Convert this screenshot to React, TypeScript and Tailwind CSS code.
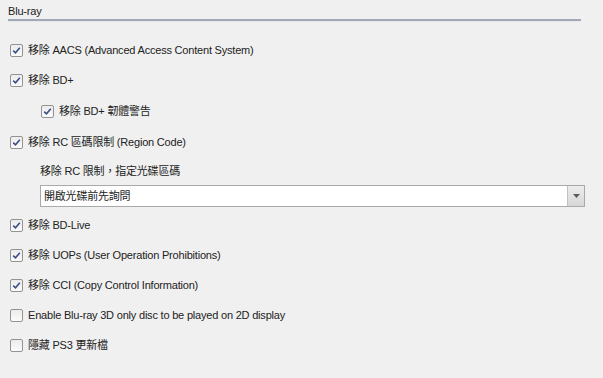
const font = { fontFamily: '"Liberation Sans", "Noto Sans CJK TC", sans-serif' }

const CheckBox = ({ checked }: { checked: boolean }) => (
  <span className="flex h-[13px] w-[13px] shrink-0 items-center justify-center rounded-[2px] border border-[#939393] bg-gradient-to-b from-[#ececec] to-[#fbfbfb]">
    {checked && (
      <svg width="9" height="9" viewBox="0 0 9 9">
        <path d="M1.2 4.6 L3.5 6.8 L7.8 1.8" fill="none" stroke="#3d4d85" strokeWidth="1.6" />
      </svg>
    )}
  </span>
)

const Row = ({
  label,
  checked = true,
  indent = false,
  tall = false,
}: {
  label: string
  checked?: boolean
  indent?: boolean
  tall?: boolean
}) => (
  <div className={`flex items-center gap-[5px] ${tall ? "h-[31px]" : "h-[30px]"} ${indent ? "pl-[41px]" : "pl-[10px]"}`}>
    <CheckBox checked={checked} />
    <span>{label}</span>
  </div>
)

export default function App() {
  return (
    <div className="h-[378px] w-[603px] overflow-hidden bg-[#f0f0f0] text-[11px] tracking-[-0.2px] text-[#222]" style={font}>
      <div className="px-[8px] pt-[4px] pr-[22px]">
        <div className="text-[11px] leading-[14px] text-[#222]">Blu-ray</div>
        <div className="mt-[1px] h-[2px] bg-[#a3a9b3]" />
        <div className="h-[1px] bg-[#e6e9ee]" />
      </div>

      <div className="mt-[13px]">
        <Row label="移除 AACS (Advanced Access Content System)" />
        <Row label="移除 BD+" tall />
        <Row label="移除 BD+ 韌體警告" indent tall />
        <Row label="移除 RC 區碼限制 (Region Code)" />
        <div className="flex h-[28px] items-center pl-[40px]">移除 RC 限制，指定光碟區碼</div>
        <div className="ml-[40px] flex h-[22px] w-[545px] border border-[#a9a9a9] bg-white">
          <div className="flex flex-1 items-center pl-[3px]">開啟光碟前先詢問</div>
          <div className="flex w-[17px] items-center justify-center border-l border-[#c2c2c2] bg-gradient-to-b from-[#ededed] to-[#d6d6d6]">
            <svg width="7" height="4" viewBox="0 0 7 4">
              <path d="M0 0 L7 0 L3.5 4 Z" fill="#5a5a5a" />
            </svg>
          </div>
        </div>
        <div className="h-[3px]" />
        <Row label="移除 BD-Live" />
        <Row label="移除 UOPs (User Operation Prohibitions)" />
        <Row label="移除 CCI (Copy Control Information)" />
        <Row label="Enable Blu-ray 3D only disc to be played on 2D display" checked={false} />
        <Row label="隱藏 PS3 更新檔" checked={false} tall />
      </div>
    </div>
  )
}
